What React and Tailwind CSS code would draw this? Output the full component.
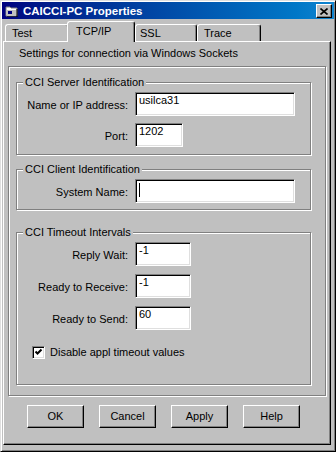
import React from "react";

const face = "bg-[#c0c0c0]";

function Field({ w, value, caret }) {
  return (
    <div
      className={`h-[24px] bg-white border border-t-[#808080] border-l-[#808080] border-b-white border-r-white shadow-[inset_1px_1px_0_#000,inset_-1px_-1px_0_#dfdfdf] pl-[3px] pt-[1px] whitespace-nowrap overflow-hidden`}
      style={{ width: w }}
    >
      {caret ? (
        <div className="mt-[2px] ml-[0px] w-[1px] h-[14px] bg-black" />
      ) : (
        value
      )}
    </div>
  );
}

function Label({ children }) {
  return <div className="text-right pt-[7px] whitespace-nowrap">{children}</div>;
}

function Group({ title, className = "", children }) {
  return (
    <div
      className={`relative w-[295px] ml-[7px] border border-[#808080] shadow-[inset_1px_1px_0_#fff,1px_1px_0_#fff] ${className}`}
    >
      <div className={`absolute left-[6px] top-[-7px] px-[2px] ${face} whitespace-nowrap`}>
        {title}
      </div>
      {children}
    </div>
  );
}

function Tab({ label, className = "", selected }) {
  return (
    <div
      className={`${face} border-t border-l border-white border-r border-r-black shadow-[inset_-1px_0_0_#808080] rounded-t-[3px] whitespace-nowrap ${
        selected ? "h-[21px] -mb-[1px] relative z-10 pt-[3px]" : "h-[17px] pt-[2px]"
      } ${className}`}
    >
      {label}
    </div>
  );
}

function Button({ children }) {
  return (
    <div className="w-[57px] h-[23px] flex items-center justify-center border border-t-white border-l-white border-r-black border-b-black shadow-[inset_-1px_-1px_0_#808080]">
      {children}
    </div>
  );
}

export default function App() {
  return (
    <div
      className={`w-[336px] h-[452px] ${face} border border-t-[#dfdfdf] border-l-[#dfdfdf] border-b-black border-r-black shadow-[inset_1px_1px_0_#fff,inset_-1px_-1px_0_#808080] p-[1px] flex flex-col text-[11px] leading-[13px] text-black [font-family:'Liberation_Sans',Arial,sans-serif]`}
    >
      {/* Title bar */}
      <div className="h-[17px] shrink-0 flex items-center bg-linear-to-r from-[#000080] to-[#1084d0] pl-[3px] pr-[2px]">
        <svg width="13" height="12" viewBox="0 0 13 12" className="shrink-0">
          <path d="M1 2h4l1 1h6v8H1z" fill="#ffffff" stroke="#808080" strokeWidth="1" />
          <path d="M2 5h9v5H2z" fill="#c0c0c0" />
          <path d="M3 6h4v3H3z" fill="#000080" />
          <path d="M12 4v8H2" fill="none" stroke="#000" strokeWidth="1" />
        </svg>
        <div className="ml-[5px] text-white font-bold text-[11.5px] leading-[14px] whitespace-nowrap">
          CAICCI-PC Properties
        </div>
        <div className="ml-auto mt-[1px] w-[16px] h-[14px] bg-[#c0c0c0] border border-t-white border-l-white border-r-black border-b-black shadow-[inset_-1px_-1px_0_#808080] flex items-center justify-center">
          <svg width="8" height="7" viewBox="0 0 8 7">
            <path d="M0.5 0.5l7 6M7.5 0.5l-7 6" stroke="#000" strokeWidth="1.6" />
          </svg>
        </div>
      </div>

      {/* Tabs */}
      <div className="h-[22px] shrink-0 flex items-end ml-[1px] mr-[3px]">
        <Tab label="Test" className="ml-[2px] w-[64px] pl-[6px]" />
        <Tab label="TCP/IP" selected className="-ml-[2px] w-[68px] pl-[8px]" />
        <Tab label="SSL" className="w-[62px] pl-[4px]" />
        <Tab label="Trace" className="w-[64px] pl-[6px]" />
      </div>

      {/* Panel */}
      <div className="flex-1 ml-[1px] mr-[3px] mb-[5px] border-t border-l border-white border-r border-b border-r-black border-b-black shadow-[inset_-1px_-1px_0_#808080] flex flex-col">
        <div className="pt-[5px] pl-[15px] whitespace-nowrap">
          Settings for connection via Windows Sockets
        </div>

        <div className="mt-[6px] ml-[4px] mr-[4px] border border-[#808080] shadow-[inset_1px_1px_0_#fff,1px_1px_0_#fff] pt-[15px] pb-[10px]">
          <Group title="CCI Server Identification" className="pt-[9px] pb-[7px]">
            <div className="grid grid-cols-[111px_auto] gap-x-[7px] gap-y-[7px] items-start">
              <Label>Name or IP address:</Label>
              <Field w={160} value="usilca31" />
              <Label>Port:</Label>
              <Field w={48} value="1202" />
            </div>
          </Group>

          <Group title="CCI Client Identification" className="mt-[14px] pt-[9px] pb-[6px]">
            <div className="grid grid-cols-[111px_auto] gap-x-[7px] items-start">
              <Label>System Name:</Label>
              <Field w={160} caret />
            </div>
          </Group>

          <Group title="CCI Timeout Intervals" className="mt-[22px] pt-[9px] pb-[25px]">
            <div className="grid grid-cols-[111px_auto] gap-x-[7px] gap-y-[8px] items-start">
              <Label>Reply Wait:</Label>
              <Field w={56} value="-1" />
              <Label>Ready to Receive:</Label>
              <Field w={56} value="-1" />
              <Label>Ready to Send:</Label>
              <Field w={56} value="60" />
            </div>
            <div className="mt-[16px] pl-[15px] flex items-center h-[13px]">
              <div className="w-[13px] h-[13px] bg-white border border-t-[#808080] border-l-[#808080] border-b-white border-r-white shadow-[inset_1px_1px_0_#000,inset_-1px_-1px_0_#dfdfdf] flex items-center justify-center">
                <svg width="9" height="9" viewBox="0 0 9 9">
                  <path d="M1.5 3.5l2 2l4-4" fill="none" stroke="#000" strokeWidth="2" />
                </svg>
              </div>
              <div className="ml-[5px] whitespace-nowrap">Disable appl timeout values</div>
            </div>
          </Group>
        </div>

        <div className="mt-[9px] pl-[23px] flex gap-[15px]">
          <Button>OK</Button>
          <Button>Cancel</Button>
          <Button>Apply</Button>
          <Button>Help</Button>
        </div>
      </div>
    </div>
  );
}
